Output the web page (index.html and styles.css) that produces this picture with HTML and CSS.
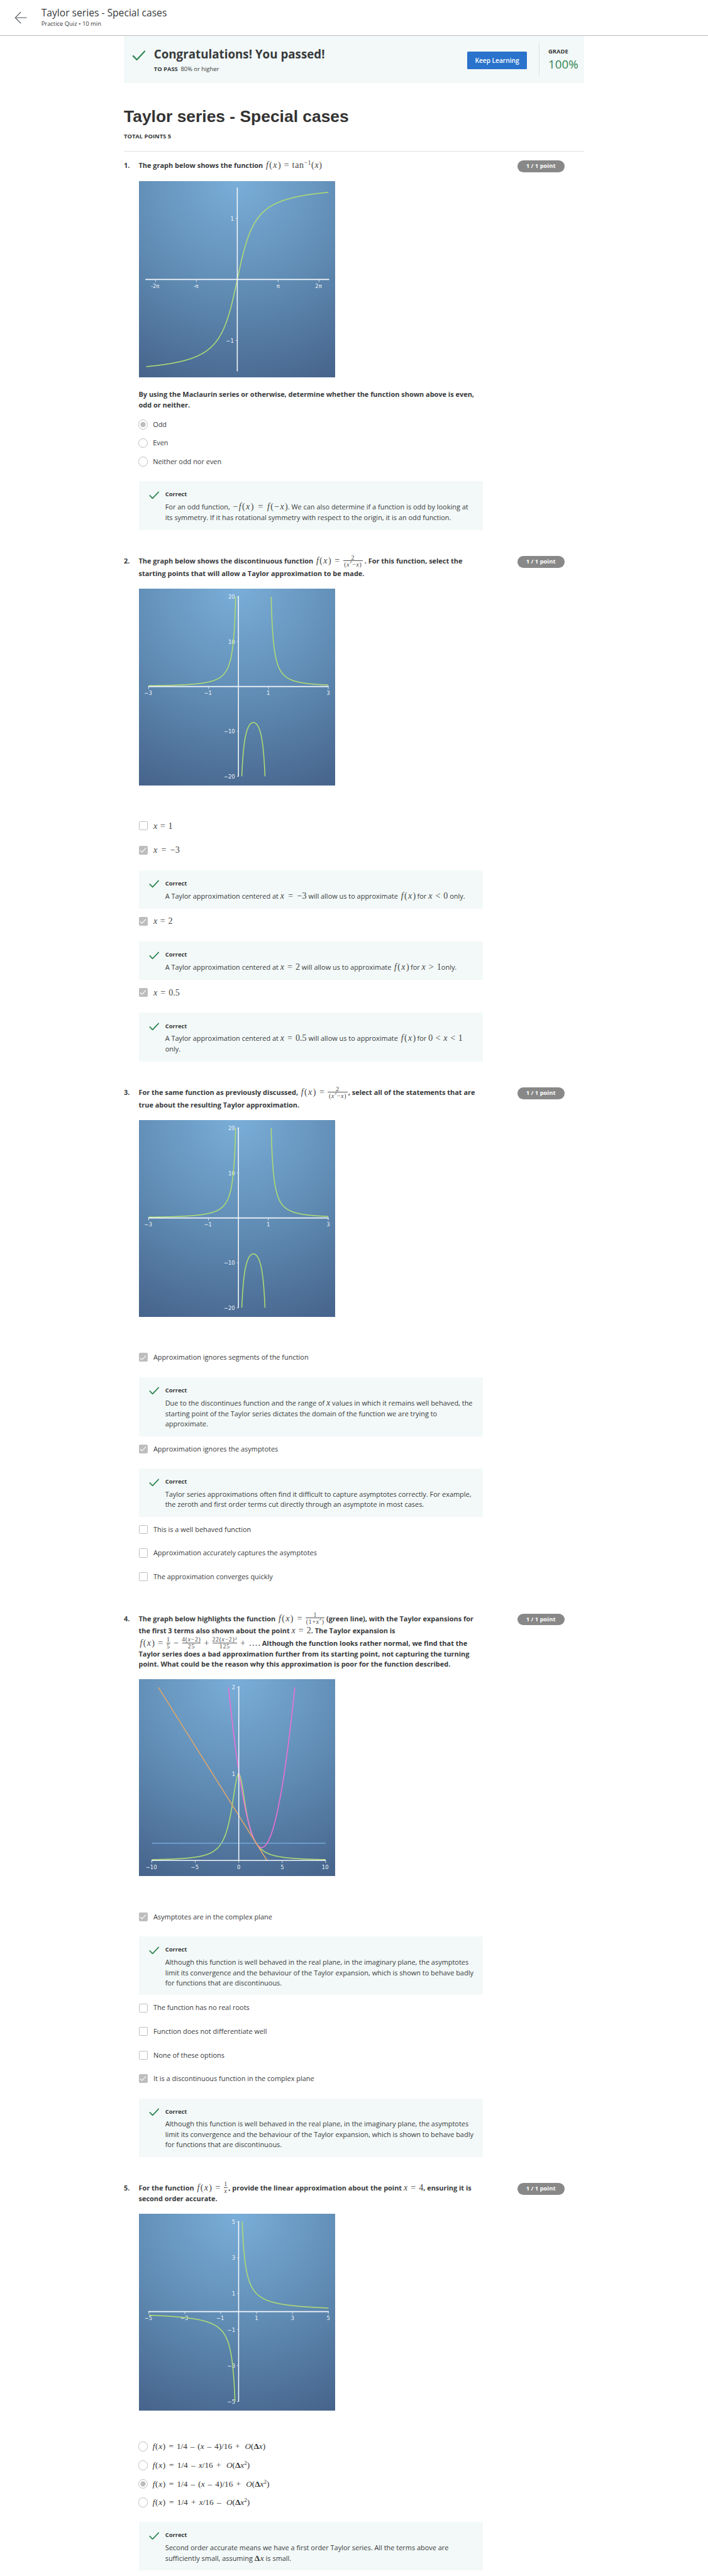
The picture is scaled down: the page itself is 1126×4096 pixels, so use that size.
FILE: index.html
```html
<!DOCTYPE html>
<html lang="en">
<head>
<meta charset="utf-8">
<title>Taylor series - Special cases</title>
<link rel="stylesheet" href="styles.css">
</head>
<body>
<svg class="defs" width="0" height="0" aria-hidden="true">
  <symbol id="tick" viewBox="0 0 21 16"><path d="M1 8.2 7.2 14.6 20 1" fill="none" stroke="currentColor" stroke-width="2.2"/></symbol>
</svg>

<header class="topbar">
  <svg class="back" viewBox="0 0 26 26"><path d="M13 1.5 1.5 13 13 24.500" fill="none" stroke="#373a3c" stroke-width="1.3"/><path d="M2 13H25" stroke="#8b8f92" stroke-width="2"/></svg>
  <div>
    <div class="topbar-title">Taylor series - Special cases</div>
    <div class="topbar-sub">Practice Quiz • 10 min</div>
  </div>
</header>

<main class="page">
  <section class="banner">
    <svg class="banner-tick"><use href="#tick"/></svg>
    <div class="banner-text">
      <h2>Congratulations! You passed!</h2>
      <p><b>TO PASS</b>80% or higher</p>
    </div>
    <button class="keep">Keep Learning</button>
    <div class="grade"><b>GRADE</b><span>100%</span></div>
  </section>

  <h1>Taylor series - Special cases</h1>
  <div class="total">TOTAL POINTS 5</div>

  <section class="question">
    <div class="num">1.</div>
    <div class="body">
      <div class="prompt"><div class="l22">The graph below shows the function <span class="m w117"><span class="fx"><i>f</i>(<i>x</i>)</span><span>=</span><span class="t1">tan<sup>−1</sup>(<i>x</i>)</span></span></div></div>
      <svg class="plot" data-plot="atan" viewBox="0 0 400 400"></svg>
      <div class="prompt after">By using the Maclaurin series or otherwise, determine whether the function shown above is even, odd or neither.</div>
      <div class="option radio"><span class="dot on"></span>Odd</div>
      <div class="option radio"><span class="dot"></span>Even</div>
      <div class="option radio"><span class="dot"></span>Neither odd nor even</div>
      <div class="feedback"><svg><use href="#tick"/></svg><div><b>Correct</b>
        <div class="l22">For an odd function, <span class="m w114"><span class="fx">−<i>f</i>(<i>x</i>)</span><span>=</span><span class="fx"><i>f</i>(−<i>x</i>)</span></span>. We can also determine if a function is odd by looking at</div>
        <div>its symmetry. If it has rotational symmetry with respect to the origin, it is an odd function.</div></div></div>
    </div>
    <div class="points">1 / 1 point</div>
  </section>

  <section class="question">
    <div class="num">2.</div>
    <div class="body">
      <div class="prompt"><div class="l25">The graph below shows the discontinuous function <span class="m w97"><span class="fx"><i>f</i>(<i>x</i>)</span><span>=</span><span class="frac w40"><span>2</span><span>(<i>x</i><sup>2</sup>−<i>x</i>)</span></span></span> . For this function, select the</div><div>starting points that will allow a Taylor approximation to be made.</div></div>
      <svg class="plot" data-plot="pole" viewBox="0 0 400 400"></svg>
      <div class="option tall first"><span class="box"></span><span class="m w39"><i>x</i><span>=</span><span>1</span></span></div>
      <div class="option tall"><span class="box on"><svg><use href="#tick"/></svg></span><span class="m w53"><i>x</i><span>=</span><span>−3</span></span></div>
      <div class="feedback"><svg><use href="#tick"/></svg><div><b>Correct</b>
        <div class="l22">A Taylor approximation centered at <span class="m w53"><i>x</i><span>=</span><span>−3</span></span> will allow us to approximate <span class="m w32"><span class="fx"><i>f</i>(<i>x</i>)</span></span> for <span class="m w40"><i>x</i><span>&lt;</span><span>0</span></span> only.</div></div></div>
      <div class="option tall"><span class="box on"><svg><use href="#tick"/></svg></span><span class="m w39"><i>x</i><span>=</span><span>2</span></span></div>
      <div class="feedback"><svg><use href="#tick"/></svg><div><b>Correct</b>
        <div class="l22">A Taylor approximation centered at <span class="m w40"><i>x</i><span>=</span><span>2</span></span> will allow us to approximate <span class="m w32"><span class="fx"><i>f</i>(<i>x</i>)</span></span> for <span class="m w40"><i>x</i><span>&gt;</span><span>1</span></span>only.</div></div></div>
      <div class="option tall"><span class="box on"><svg><use href="#tick"/></svg></span><span class="m w53"><i>x</i><span>=</span><span>0.5</span></span></div>
      <div class="feedback"><svg><use href="#tick"/></svg><div><b>Correct</b>
        <div class="l22">A Taylor approximation centered at <span class="m w53"><i>x</i><span>=</span><span>0.5</span></span> will allow us to approximate <span class="m w32"><span class="fx"><i>f</i>(<i>x</i>)</span></span> for <span class="m w70"><span>0</span><span>&lt;</span><i>x</i><span>&lt;</span><span>1</span></span></div>
        <div>only.</div></div></div>
    </div>
    <div class="points">1 / 1 point</div>
  </section>

  <section class="question">
    <div class="num">3.</div>
    <div class="body">
      <div class="prompt"><div class="l25">For the same function as previously discussed, <span class="m w97"><span class="fx"><i>f</i>(<i>x</i>)</span><span>=</span><span class="frac w40"><span>2</span><span>(<i>x</i><sup>2</sup>−<i>x</i>)</span></span></span>&hairsp;, select all of the statements that are</div><div>true about the resulting Taylor approximation.</div></div>
      <svg class="plot" data-plot="pole" viewBox="0 0 400 400"></svg>
      <div class="option first"><span class="box on"><svg><use href="#tick"/></svg></span>Approximation ignores segments of the function</div>
      <div class="feedback"><svg><use href="#tick"/></svg><div><b>Correct</b>
        <div class="l22">Due to the discontinues function and the range of <span class="m"><i>x</i></span> values in which it remains well behaved, the</div>
        <div>starting point of the Taylor series dictates the domain of the function we are trying to</div>
        <div>approximate.</div></div></div>
      <div class="option"><span class="box on"><svg><use href="#tick"/></svg></span>Approximation ignores the asymptotes</div>
      <div class="feedback"><svg><use href="#tick"/></svg><div><b>Correct</b>
        <div>Taylor series approximations often find it difficult to capture asymptotes correctly. For example,</div>
        <div>the zeroth and first order terms cut directly through an asymptote in most cases.</div></div></div>
      <div class="option"><span class="box"></span>This is a well behaved function</div>
      <div class="option"><span class="box"></span>Approximation accurately captures the asymptotes</div>
      <div class="option"><span class="box"></span>The approximation converges quickly</div>
    </div>
    <div class="points">1 / 1 point</div>
  </section>

  <section class="question">
    <div class="num">4.</div>
    <div class="body">
      <div class="prompt">
        <div class="l25">The graph below highlights the function <span class="m w96"><span class="fx"><i>f</i>(<i>x</i>)</span><span>=</span><span class="frac w38"><span>1</span><span>(1+<i>x</i><sup>2</sup>)</span></span></span> (green line), with the Taylor expansions for</div>
        <div class="l25">the first 3 terms also shown about the point <span class="m w40"><i>x</i><span>=</span><span>2</span></span>. The Taylor expansion is</div>
        <div class="l22"><span class="m w242"><span class="fx"><i>f</i>(<i>x</i>)</span><span>=</span><span class="frac w7"><span>1</span><span>5</span></span><span>−</span><span class="frac w38"><span>4(<i>x</i>−2)</span><span>25</span></span><span>+</span><span class="frac w50"><span>22(<i>x</i>−2)<sup>2</sup></span><span>125</span></span><span>+</span><span>…</span></span>&hairsp;. Although the function looks rather normal, we find that the</div>
        <div>Taylor series does a bad approximation further from its starting point, not capturing the turning</div>
        <div>point. What could be the reason why this approximation is poor for the function described.</div>
      </div>
      <svg class="plot" data-plot="bell" viewBox="0 0 400 400"></svg>
      <div class="option first"><span class="box on"><svg><use href="#tick"/></svg></span>Asymptotes are in the complex plane</div>
      <div class="feedback"><svg><use href="#tick"/></svg><div><b>Correct</b>
        <div>Although this function is well behaved in the real plane, in the imaginary plane, the asymptotes</div>
        <div>limit its convergence and the behaviour of the Taylor expansion, which is shown to behave badly</div>
        <div>for functions that are discontinuous.</div></div></div>
      <div class="option"><span class="box"></span>The function has no real roots</div>
      <div class="option"><span class="box"></span>Function does not differentiate well</div>
      <div class="option"><span class="box"></span>None of these options</div>
      <div class="option"><span class="box on"><svg><use href="#tick"/></svg></span>It is a discontinuous function in the complex plane</div>
      <div class="feedback"><svg><use href="#tick"/></svg><div><b>Correct</b>
        <div>Although this function is well behaved in the real plane, in the imaginary plane, the asymptotes</div>
        <div>limit its convergence and the behaviour of the Taylor expansion, which is shown to behave badly</div>
        <div>for functions that are discontinuous.</div></div></div>
    </div>
    <div class="points">1 / 1 point</div>
  </section>

  <section class="question">
    <div class="num">5.</div>
    <div class="body">
      <div class="prompt"><div class="l22">For the function <span class="m w65"><span class="fx"><i>f</i>(<i>x</i>)</span><span>=</span><span class="frac w7"><span>1</span><span><i>x</i></span></span></span>&hairsp;, provide the linear approximation about the point <span class="m w40"><i>x</i><span>=</span><span>4</span></span>, ensuring it is</div><div>second order accurate.</div></div>
      <svg class="plot" data-plot="recip" viewBox="0 0 400 400"></svg>
      <div class="option radio first"><span class="dot"></span><span class="m eq w232"><span class="t1"><i>f</i>(<i>x</i>)</span><span>=</span><span>1/4</span><span>–</span><span>(<i>x</i></span><span>–</span><span>4)/16</span><span>+</span><span class="gap"><i>O</i>(<b>Δ</b><i>x</i>)</span></span></div>
      <div class="option radio"><span class="dot"></span><span class="m eq w200"><span class="t1"><i>f</i>(<i>x</i>)</span><span>=</span><span>1/4</span><span>–</span><span><i>x</i>/16</span><span>+</span><span class="gap"><i>O</i>(<b>Δ</b><i>x</i><sup>2</sup>)</span></span></div>
      <div class="option radio"><span class="dot on"></span><span class="m eq w240"><span class="t1"><i>f</i>(<i>x</i>)</span><span>=</span><span>1/4</span><span>–</span><span>(<i>x</i></span><span>–</span><span>4)/16</span><span>+</span><span class="gap"><i>O</i>(<b>Δ</b><i>x</i><sup>2</sup>)</span></span></div>
      <div class="option radio"><span class="dot"></span><span class="m eq w200"><span class="t1"><i>f</i>(<i>x</i>)</span><span>=</span><span>1/4</span><span>+</span><span><i>x</i>/16</span><span>–</span><span class="gap"><i>O</i>(<b>Δ</b><i>x</i><sup>2</sup>)</span></span></div>
      <div class="feedback"><svg><use href="#tick"/></svg><div><b>Correct</b>
        <div>Second order accurate means we have a first order Taylor series. All the terms above are</div>
        <div>sufficiently small, assuming <span class="m eq"><strong>Δ</strong><i>x</i></span> is small.</div></div></div>
    </div>
    <div class="points">1 / 1 point</div>
  </section>
</main>
<script src="plots.js"></script>
</body>
</html>
```
FILE: styles.css
```css
* { box-sizing: border-box; }
html { background: #fff; }
body {
  margin: 0;
  font-family: "Open Sans", sans-serif;
  font-size: 14px;
  line-height: 21px;
  color: #373a3c;
}
.topbar, .page { zoom: 0.78194; }
.defs { position: absolute; }
h1, h2, p { margin: 0; }
b { font-weight: 700; }

.topbar {
  height: 73px;
  border-bottom: 1px solid #b9b9b9;
  display: flex;
  align-items: flex-start;
  padding: 13px 30px 0 29px;
  gap: 29px;
}
.back { width: 26px; height: 26px; margin-top: 10px; }
.topbar-title { font-size: 20px; line-height: 28px; }
.topbar-sub { font-size: 12px; line-height: 16px; }

.page { width: 936px; margin-left: 252px; padding-bottom: 9px; }
.banner {
  height: 96px;
  background: #f3f9f8;
  display: flex;
  align-items: flex-start;
}
.banner-tick { width: 28px; height: 21px; margin: 29px 0 0 16px; color: #2f8552; }
.banner-text { margin: 20px 0 0 17px; flex: 1; }
.banner-text h2 { font-size: 24px; line-height: 34px; font-weight: 700; }
.banner-text p { font-size: 12px; line-height: 18px; margin-top: 5px; }
.banner-text p b { margin-right: 6px; }
.keep {
  width: 122px; height: 36px; margin: 32px 24px 0 0; padding: 0;
  border: 0; border-radius: 2px;
  background: #2a73cc; color: #fff;
  font: 600 13px "Open Sans", sans-serif;
}
.grade {
  width: 92px; height: 68px; margin-top: 14px; padding: 9px 0 0 18px;
  border-left: 1px solid #dfe4e3;
  display: flex; flex-direction: column;
}
.grade b { font-size: 12px; line-height: 18px; }
.grade span { font-size: 24px; line-height: 32px; color: #2f8552; }

h1 {
  font: 700 33.800px/40px "Liberation Sans", Arial, sans-serif;
  margin-top: 49px;
  color: #333;
}
.total { font-size: 12px; font-weight: 700; line-height: 18px; margin-top: 11px; padding-bottom: 20px; border-bottom: 1px solid #e0e0e0; height: 39px; }

.question {
  display: grid;
  grid-template-columns: 30px 700px 166px;
  padding-top: 18px;
}
.question + .question { padding-top: 53px; }
.num { font-weight: 700; }
.points {
  margin-left: 70px; width: 96px; height: 24px; line-height: 23px;
  border-radius: 12px; background: #888; color: #fff;
  font-size: 12px; font-weight: 700; text-align: center;
}
.prompt { font-weight: 700; }
.prompt div { height: 21px; white-space: nowrap; }
.prompt .l22, .feedback .l22 { height: 22px; }
.prompt .l25 { height: 25px; }
.prompt.after { margin: 24px 0 13px; }
.plot {
  display: block; width: 400px; height: 400px; margin-top: 20px;
  background: radial-gradient(circle 447px at 50% 0, #7aaed8 0, #608cb4 50%, #46638b 100%);
}
.plot + .option { margin-top: 57px; }
.plot text { font: 12px "DejaVu Sans Condensed", "DejaVu Sans", sans-serif; fill: #eef3f8; }
.plot path { fill: none; }
.axis { stroke: #f4f7fb; stroke-width: 2; }
.ticks { stroke: #f4f7fb; stroke-width: 1; }

.option { height: 48px; padding-top: 15.500px; display: flex; align-items: flex-start; }
.option.tall { height: 49px; }
.option.radio { height: 38px; padding-top: 5.500px; }
.box {
  width: 18px; height: 18px; margin: 1.500px 12px 0 0; flex: none;
  border: 2px solid #bdbdbd; border-radius: 2px;
  display: flex; align-items: center; justify-content: center;
}
.box.on { background: #bdbdbd; }
.box svg { width: 14px; height: 10px; flex: none; color: #fff; }
.dot {
  width: 20px; height: 20px; margin: .5px 10px 0 -1px; flex: none;
  border: 2px solid #bdbdbd; border-radius: 50%;
}
.dot.on { background: radial-gradient(circle, #bdbdbd 5px, transparent 5.500px); }

.feedback {
  margin-top: 18px; padding: 18px 0 14px 21px;
  background: #f3f9f8;
  display: flex;
}
.feedback > svg { width: 21px; height: 16px; margin: 2px 12px 0 0; flex: none; color: #2f8552; }
.feedback b { display: block; font-size: 12px; line-height: 18px; margin-bottom: 6px; }
.feedback > div > div { height: 21px; white-space: nowrap; }

/* Inline formulas */
.m {
  display: inline-flex; align-items: center; justify-content: space-between;
  font: 400 18px/17px "Liberation Serif", "Times New Roman", serif;
  margin: -6px 0; color: #444;
}
.option .m { margin: 2px 0 0; }
.option .m.eq { margin-left: -3px; }
.m.eq { font-size: 17px; color: #333; }
.feedback .m.eq { gap: 1px; }
.m sup { font-size: 0.68em; line-height: 0; vertical-align: 0.5em; }
.fx { letter-spacing: 1.700px; margin-right: -1.700px; }
.t1 { letter-spacing: .8px; }
.m > .fx:first-child, .m > .t1:first-child { padding-left: 2.500px; }
.gap { margin-left: 4px; }
.m b { display: inline; font-size: inherit; }
.frac { display: inline-flex; flex-direction: column; align-items: center; font-size: 12.500px; line-height: 12px; white-space: nowrap; letter-spacing: .9px; }
.frac span + span { border-top: 1px solid #555; width: 100%; padding-top: 1px; display: flex; justify-content: center; }
.w7 { width: 8px; } .w32 { width: 32px; } .w38 { width: 38px; } .w39 { width: 39px; }
.w40 { width: 40px; } .w50 { width: 50px; } .w53 { width: 53.500px; } .w65 { width: 65px; }
.w70 { width: 70px; } .w96 { width: 96px; } .w97 { width: 97px; } .w114 { width: 114px; }
.w117 { width: 117px; } .w200 { width: 200px; } .w232 { width: 232px; } .w240 { width: 240px; }
.w242 { width: 242px; }
```
FILE: plots.js
```js
const GREEN = '#aedb74';
const plots = {
  atan: {
    ox: 200, oy: 200, ux: 26.45, uy: 124, h: [13, 387], v: [13, 387], lim: 2,
    xt: [[-6.2832, '-2π'], [-3.1416, '-π'], [3.1416, 'π'], [6.2832, '2π']],
    yt: [[1, '1'], [-1, '−1']],
    curves: [[Math.atan, -7, 7, GREEN]]
  },
  pole: {
    ox: 202.300, oy: 199, ux: 60.9, uy: 9.13, h: [19, 386], v: [15, 382], lim: 20,
    xt: [[-3, '−3'], [-1, '−1'], [1, '1'], [3, '3']],
    yt: [[20, '20'], [10, '10'], [-10, '−10'], [-20, '−20']],
    curves: [
      [x => 2 / (x * x - x), -3, -0.0917, GREEN],
      [x => 2 / (x * x - x), 0.1127, 0.8873, GREEN],
      [x => 2 / (x * x - x), 1.0917, 3, GREEN]
    ]
  },
  bell: {
    ox: 203, oy: 368.7, ux: 17.68, uy: 176, h: [25, 380], v: [14.5, 369.5], lim: 2,
    xt: [[-10, '−10'], [-5, '−5'], [0, '0'], [5, '5'], [10, '10']],
    yt: [[2, '2'], [1, '1']],
    curves: [
      [x => 1 / (1 + x * x), -10, 10, GREEN],
      [() => 0.2, -10, 10, '#74a9d8'],
      [x => 0.2 - 0.16 * (x - 2) + 0.127 * (x - 2) ** 2, -1.19, 6.45, '#f06fd8'],
      [x => 0.2 - 0.16 * (x - 2), -9.25, 3.25, '#dfa76c']
    ]
  },
  recip: {
    ox: 202.7, oy: 199, ux: 36.5, uy: 36.55, h: [19, 386], v: [15, 382], lim: 5,
    xt: [[-5, '−5'], [-3, '−3'], [-1, '−1'], [1, '1'], [3, '3'], [5, '5']],
    yt: [[5, '5'], [3, '3'], [1, '1'], [-1, '−1'], [-3, '−3'], [-5, '−5']],
    curves: [[x => 1 / x, -5, -0.2, GREEN], [x => 1 / x, 0.2, 5, GREEN]]
  }
};

for (const svg of document.querySelectorAll('[data-plot]')) {
  const p = plots[svg.dataset.plot];
  const X = x => (p.ox + x * p.ux).toFixed(2);
  const Y = y => (p.oy - y * p.uy).toFixed(2);
  let out = '';
  let ticks = '';
  for (const [v, label] of p.xt) {
    out += `<text x="${X(v) - (label.length > 1 ? 1 : 0)}" y="${p.oy + 17}" text-anchor="middle">${label}</text>`;
    ticks += `M${X(v)} ${p.oy}v5`;
  }
  for (const [v, label] of p.yt) {
    out += `<text x="${p.ox - 7}" y="${+Y(v) + 4.4}" text-anchor="end">${label}</text>`;
    ticks += `M${p.ox} ${Y(v)}h-3`;
  }
  for (const [f, a, b, color] of p.curves) {
    let d = '';
    for (let i = 0; i <= 400; i++) {
      const x = a + (b - a) * i / 400;
      const y = Math.max(-p.lim, Math.min(p.lim, f(x)));
      d += (i ? 'L' : 'M') + X(x) + ' ' + Y(y);
    }
    out += `<path d="${d}" stroke="${color}" stroke-width="2"/>`;
  }
  out += `<path class="ticks" d="${ticks}"/>`;
  out += `<path class="axis" d="M${p.h[0]} ${p.oy}H${p.h[1]}M${p.ox} ${p.v[0]}V${p.v[1]}"/>`;
  svg.innerHTML = out;
}
```
